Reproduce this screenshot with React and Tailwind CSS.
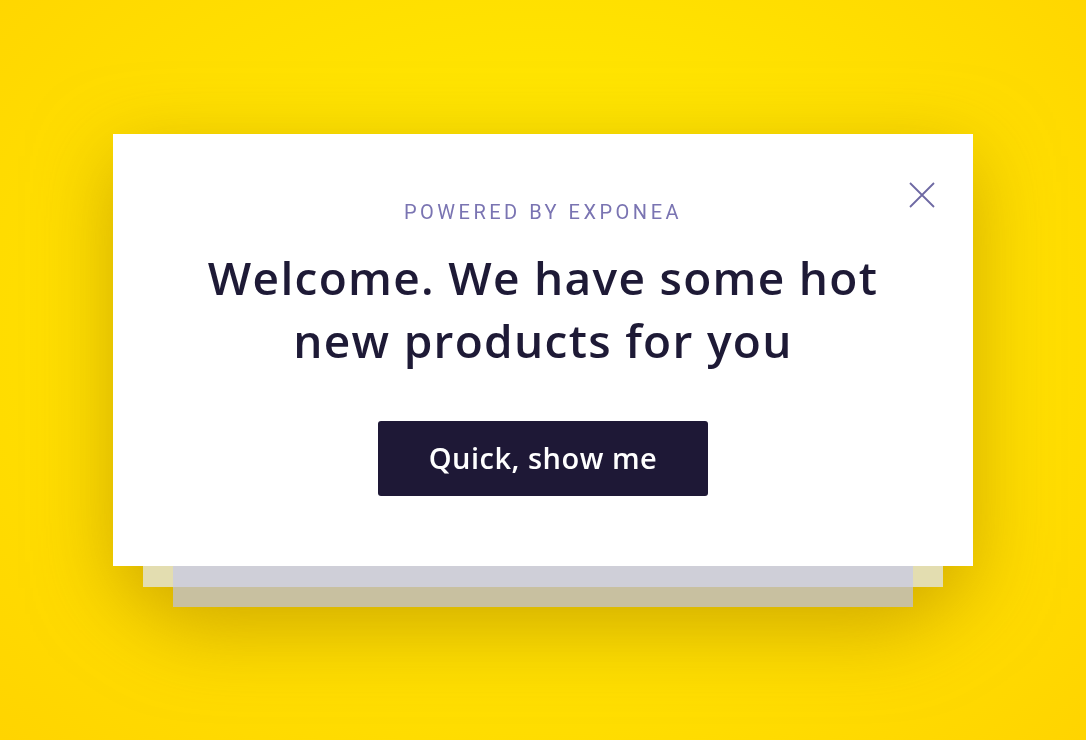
// ── Close icon ────────────────────────────────────────
const CloseIcon = () => (
    <svg width="26" height="26" viewBox="0 0 26 26" fill="none">
        <path d="M1 1l24 24M25 1L1 25" stroke="currentColor" strokeWidth="1.8" />
    </svg>
);

// ── Popup card ────────────────────────────────────────
const Popup = () => (
    <div className="relative flex flex-col items-center bg-white px-10 pt-[66px] pb-[70px]">
        <button className="absolute right-[38px] top-[48px] text-[#6e69a3]">
            <CloseIcon />
        </button>
        <p className="text-[20px] leading-6 tracking-[3.5px] text-[#7a74b2] font-['Roboto',sans-serif]">
            POWERED BY EXPONEA
        </p>
        <h1 className="mt-[22px] text-center text-[46px] leading-[63px] tracking-[1.3px] font-semibold text-[#1e1a36] font-['Open_Sans',sans-serif]">
            Welcome. We have some hot
            <br />
            new products for you
        </h1>
        <button className="mt-[49px] h-[75px] w-[330px] rounded-[3px] bg-[#1e1836] text-[29px] tracking-[0.5px] font-semibold text-white font-['Open_Sans',sans-serif]">
            Quick, show me
        </button>
    </div>
);

export default function App() {
    return (
        <div className="flex h-[740px] w-full items-center justify-center bg-[radial-gradient(ellipse_at_50%_45%,#ffef00_0%,#ffe400_45%,#ffd400_100%)]">
            <div className="flex w-[860px] flex-col drop-shadow-[0_22px_40px_rgba(170,125,0,0.55)]">
                <Popup />
                {/* stacked cards behind */}
                <div className="mx-[30px] h-[21px] bg-[#e3ddb0]">
                    <div className="mx-[30px] h-full bg-[#cfcfd8]" />
                </div>
                <div className="mx-[60px] h-[20px] bg-[#c8c0a0]" />
            </div>
        </div>
    );
}
